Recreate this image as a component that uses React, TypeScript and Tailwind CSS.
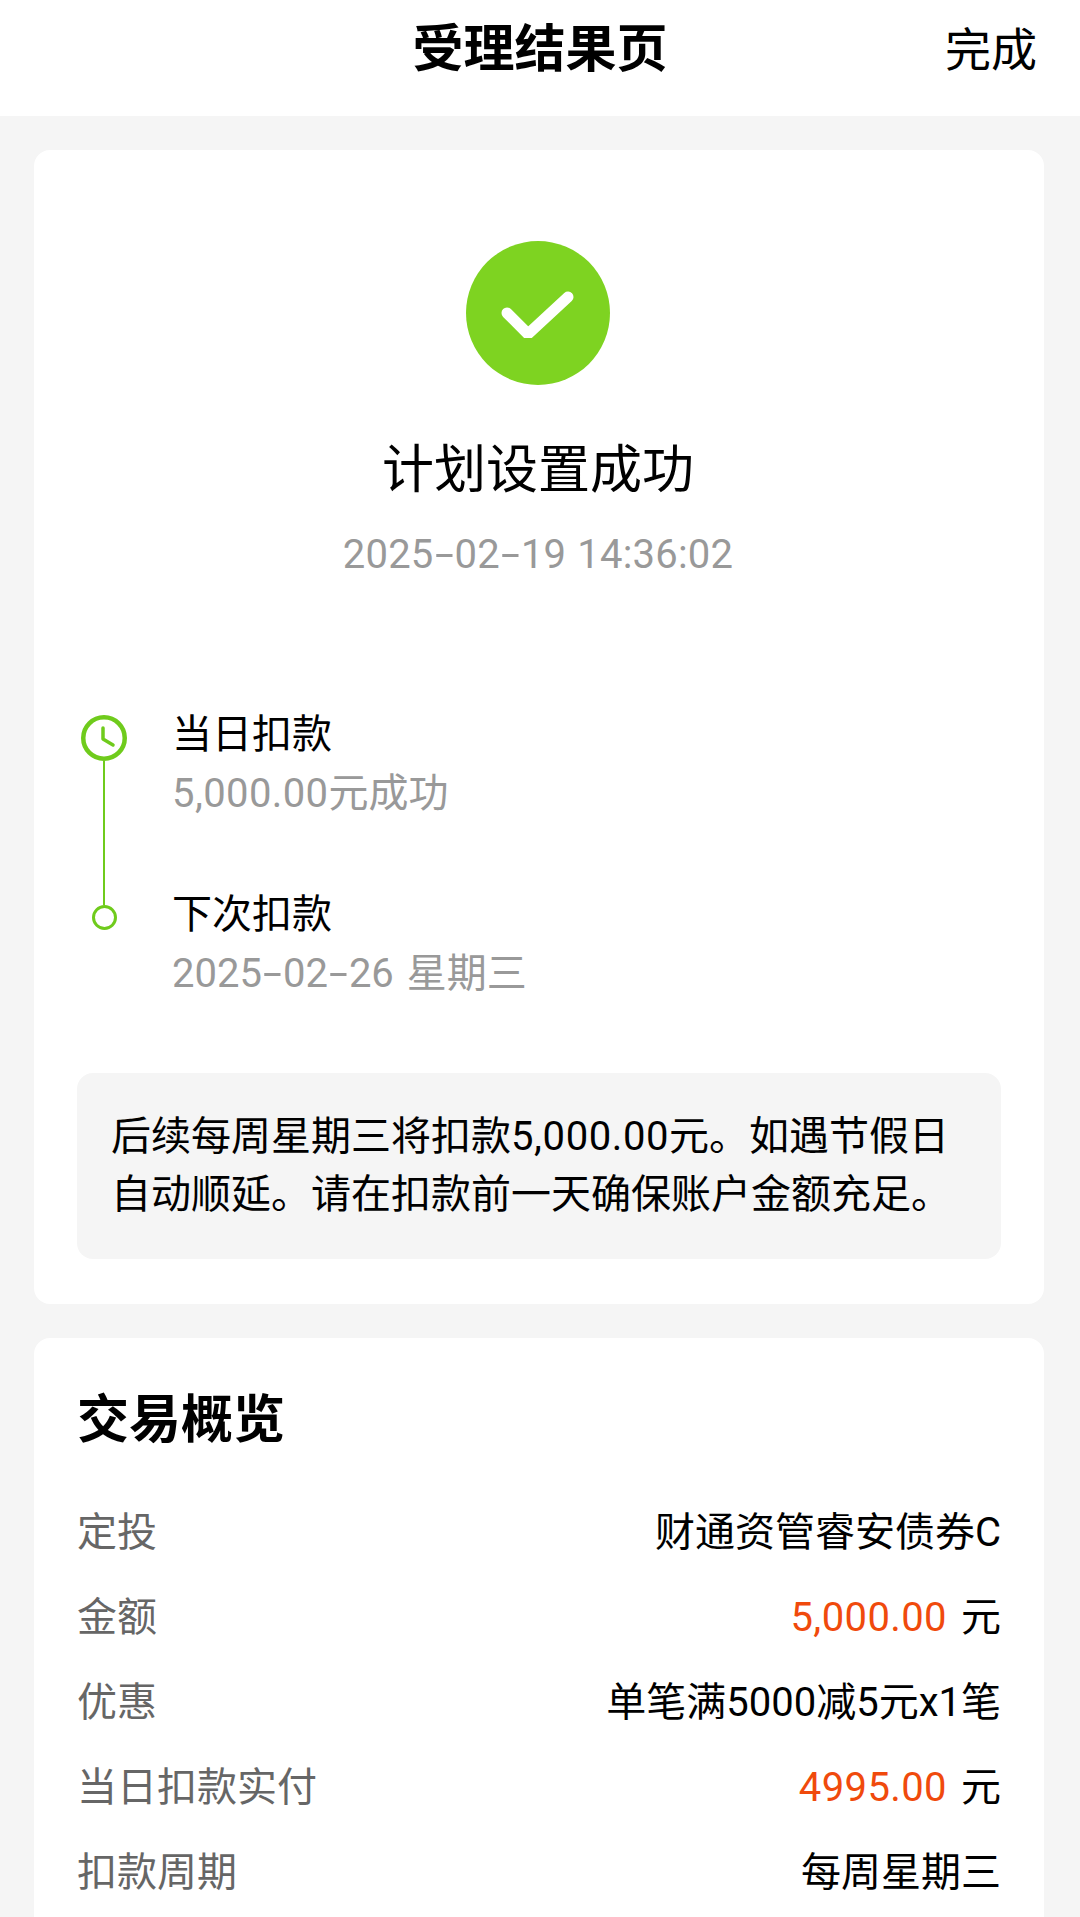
import React from "react";

const FONT = "font-['Roboto','Noto_Sans_CJK_SC',sans-serif]";

const rows = [
  { label: "定投", value: "财通资管睿安债券C" },
  { label: "金额", value: "5,000.00", unit: true },
  { label: "优惠", value: "单笔满5000减5元x1笔" },
  { label: "当日扣款实付", value: "4995.00", unit: true },
  { label: "扣款周期", value: "每周星期三" },
];

// the hyphens in the dates are much wider than Roboto's
const DateText = ({ text }: { text: string }) => (
  <>
    {text.split("-").map((part, i) => (
      <React.Fragment key={i}>
        {i > 0 && <span className="inline-block w-[21px] scale-x-[1.7] text-center">-</span>}
        {part}
      </React.Fragment>
    ))}
  </>
);

const Step = ({ title, children }: { title: string; children: React.ReactNode }) => (
  <div className="h-[180px]">
    <p className="pt-[3px] text-[40px] leading-[48px] text-black">{title}</p>
    <p className="mt-[11px] text-[40px] leading-[48px] text-[#999999] [word-spacing:3px]">{children}</p>
  </div>
);

export default function App() {
  return (
    <div className={`${FONT} h-[1917px] overflow-hidden bg-[#f5f5f5]`}>
      {/* Header */}
      <header className="relative flex h-[116px] items-center justify-center bg-white pb-4">
        <h1 className="text-[51px] font-bold text-black">受理结果页</h1>
        <span className="absolute right-[43px] text-[46px] text-black">完成</span>
      </header>

      <main className="flex flex-col gap-[34px] pr-[36px] pl-[34px] pt-[34px]">
        {/* Result card */}
        <section className="h-[1154px] rounded-[16px] bg-white px-[43px] pt-[91px]">
          <div className="flex flex-col items-center pr-[2px]">
            <div className="flex h-[144px] w-[144px] items-center justify-center rounded-full bg-[#7ed321]">
              <svg width="74" height="50" viewBox="0 0 74 50" fill="none">
                <path d="M6 25 L27 46 L67 9" stroke="white" strokeWidth="11" strokeLinecap="round" strokeLinejoin="round" />
              </svg>
            </div>
            <h2 className="mt-[51px] text-[52px] leading-[70px] font-normal text-black">计划设置成功</h2>
            <p className="mt-[25px] text-[40px] leading-[48px] tracking-[0.2px] text-[#999999] [word-spacing:1px]">
              <DateText text="2025-02-19 14:36:02" />
            </p>
          </div>

          {/* Timeline */}
          <div className="mt-[129px] flex gap-[41px]">
            <div className="flex w-[54px] flex-col items-center pt-[7px]">
              <svg width="46" height="46" viewBox="0 0 46 46" fill="none">
                <circle cx="23" cy="23" r="20.75" stroke="#6fcb1c" strokeWidth="4.5" />
                <path d="M22 13 V24 L32 30" stroke="#6fcb1c" strokeWidth="3.5" strokeLinecap="round" strokeLinejoin="round" />
              </svg>
              <div className="h-[144px] w-[2px] bg-[#6fcb1c]" />
              <div className="h-[25px] w-[25px] rounded-full border-[3px] border-[#6fcb1c]" />
            </div>
            <div>
              <Step title="当日扣款">
                <span className="tracking-[0.4px]">5,000.00</span>元成功
              </Step>
              <Step title="下次扣款">
                <DateText text="2025-02-26 星期三" />
              </Step>
            </div>
          </div>

          <div className="mt-[5px] rounded-[16px] bg-[#f5f5f5] py-[35px] pr-[35px] pl-[34px]">
            <p className="text-[40px] leading-[58px] text-black">
              后续每周星期三将扣款<span className="tracking-[0.6px]">5,000.00</span>元。如遇节假日自动顺延。请在扣款前一天确保账户金额充足。
            </p>
          </div>
        </section>

        {/* Overview card */}
        <section className="rounded-[16px] bg-white px-[43px] pt-[48px] pb-[100px]">
          <h3 className="text-[52px] leading-[70px] font-bold text-black">交易概览</h3>
          <div className="mt-[53px] flex flex-col gap-[37px]">
            {rows.map((row) => (
              <div key={row.label} className="flex items-center justify-between text-[40px] leading-[48px]">
                <span className="text-[#666666]">{row.label}</span>
                {row.unit ? (
                  <span className="flex gap-[14px] text-black">
                    <span className="tracking-[0.4px] text-[#f04a0c]">{row.value}</span>
                    <span>元</span>
                  </span>
                ) : (
                  <span className="text-black">{row.value}</span>
                )}
              </div>
            ))}
          </div>
        </section>
      </main>
    </div>
  );
}
